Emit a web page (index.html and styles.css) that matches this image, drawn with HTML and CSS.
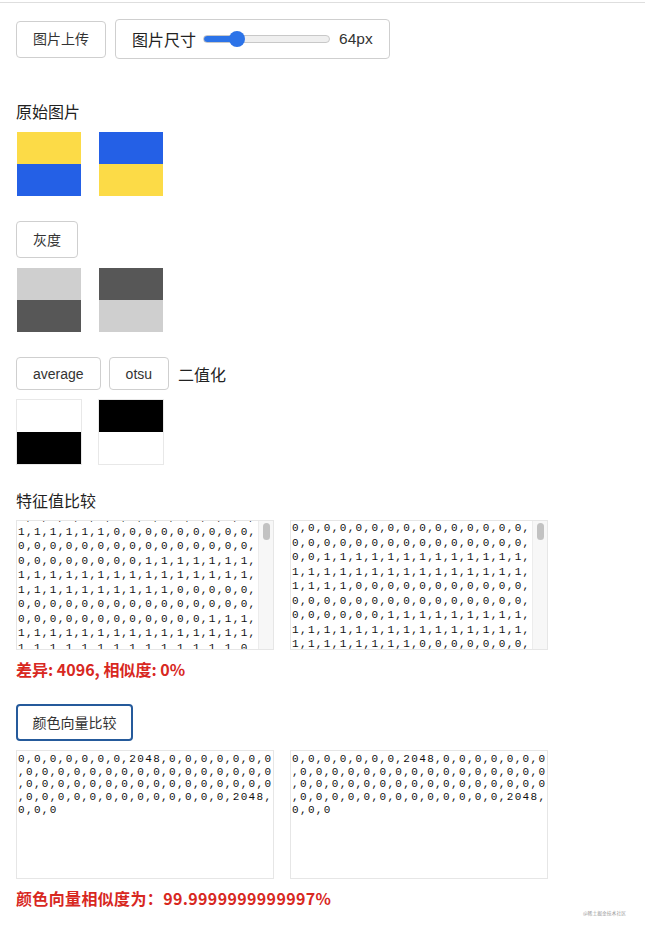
FILE: index.html
```html
<!DOCTYPE html>
<html lang="zh-CN">
<head>
<meta charset="utf-8">
<title>图片相似度比较</title>
<link rel="stylesheet" href="styles.css">
</head>
<body>
<div class="topline"></div>
<main class="page">
  <div class="toolbar">
    <button class="btn">图片上传</button>
    <div class="size-box">
      <span class="size-label">图片尺寸</span>
      <input class="size-range" type="range" min="0" max="280" value="64">
      <span class="size-value">64px</span>
    </div>
  </div>

  <section class="section section-first">
    <h2 class="title">原始图片</h2>
    <div class="thumbs">
      <div class="thumb"><div class="half yellow"></div><div class="half blue"></div></div>
      <div class="thumb"><div class="half blue"></div><div class="half yellow"></div></div>
    </div>
  </section>

  <section class="section">
    <div class="actions"><button class="btn">灰度</button></div>
    <div class="thumbs">
      <div class="thumb"><div class="half light"></div><div class="half dark"></div></div>
      <div class="thumb"><div class="half dark"></div><div class="half light"></div></div>
    </div>
  </section>

  <section class="section">
    <div class="actions">
      <button class="btn btn-sm">average</button>
      <button class="btn btn-sm">otsu</button>
      <span class="action-label">二值化</span>
    </div>
    <div class="thumbs">
      <div class="thumb framed"><div class="half white"></div><div class="half black"></div></div>
      <div class="thumb framed"><div class="half black"></div><div class="half white"></div></div>
    </div>
  </section>

  <section class="section">
    <h2 class="title">特征值比较</h2>
    <div class="boxes">
      <div class="textbox">
        <div class="textbox-text lines scrolled">1,1,1,1,1,1,1,1,1,1,1,1,1,1,1,
1,1,1,1,1,1,0,0,0,0,0,0,0,0,0,
0,0,0,0,0,0,0,0,0,0,0,0,0,0,0,
0,0,0,0,0,0,0,0,1,1,1,1,1,1,1,
1,1,1,1,1,1,1,1,1,1,1,1,1,1,1,
1,1,1,1,1,1,1,1,1,1,0,0,0,0,0,
0,0,0,0,0,0,0,0,0,0,0,0,0,0,0,
0,0,0,0,0,0,0,0,0,0,0,0,1,1,1,
1,1,1,1,1,1,1,1,1,1,1,1,1,1,1,
1,1,1,1,1,1,1,1,1,1,1,1,1,1,0,
0,0,0,0,0,0,0,0,0,0,0,0,0,0,0,</div>
        <div class="scrollbar"><div class="scroll-thumb"></div></div>
      </div>
      <div class="textbox">
        <div class="textbox-text lines">0,0,0,0,0,0,0,0,0,0,0,0,0,0,0,
0,0,0,0,0,0,0,0,0,0,0,0,0,0,0,
0,0,1,1,1,1,1,1,1,1,1,1,1,1,1,
1,1,1,1,1,1,1,1,1,1,1,1,1,1,1,
1,1,1,1,0,0,0,0,0,0,0,0,0,0,0,
0,0,0,0,0,0,0,0,0,0,0,0,0,0,0,
0,0,0,0,0,0,1,1,1,1,1,1,1,1,1,
1,1,1,1,1,1,1,1,1,1,1,1,1,1,1,
1,1,1,1,1,1,1,1,0,0,0,0,0,0,0,
0,0,0,0,0,0,0,0,0,0,0,0,0,0,0,</div>
        <div class="scrollbar"><div class="scroll-thumb"></div></div>
      </div>
    </div>
    <p class="result">差异: 4096, 相似度: 0%</p>
  </section>

  <section class="section">
    <div class="actions"><button class="btn btn-focus">颜色向量比较</button></div>
    <div class="boxes">
      <div class="textbox textbox-plain">
        <div class="textbox-text wrap">0,0,0,0,0,0,0,2048,0,0,0,0,0,0,0,0,0,0,0,0,0,0,0,0,0,0,0,0,0,0,0,0,0,0,0,0,0,0,0,0,0,0,0,0,0,0,0,0,0,0,0,0,0,0,0,0,0,0,0,0,2048,0,0,0</div>
      </div>
      <div class="textbox textbox-plain">
        <div class="textbox-text wrap">0,0,0,0,0,0,0,2048,0,0,0,0,0,0,0,0,0,0,0,0,0,0,0,0,0,0,0,0,0,0,0,0,0,0,0,0,0,0,0,0,0,0,0,0,0,0,0,0,0,0,0,0,0,0,0,0,0,0,0,0,2048,0,0,0</div>
      </div>
    </div>
    <p class="result result-wide">颜色向量相似度为：99.9999999999997%</p>
  </section>
</main>
<span class="watermark">@稀土掘金技术社区</span>
</body>
</html>
```

FILE: styles.css
```css
html, body {
  margin: 0;
  padding: 0;
  background: #fff;
}

body {
  position: relative;
  height: 930px;
  overflow: hidden;
  font-family: "Noto Sans CJK SC", "Liberation Sans", sans-serif;
  color: #222;
}

.topline {
  height: 2px;
  border-bottom: 1px solid #dedede;
}

.page {
  padding: 0 16px;
}

/* upload + size slider */
.toolbar {
  display: flex;
  align-items: center;
  gap: 9px;
  margin-top: 16px;
  height: 40px;
}

.btn {
  box-sizing: border-box;
  height: 37px;
  padding: 0 16px;
  border: 1px solid #cfcfcf;
  border-radius: 4px;
  background: #fff;
  color: #333;
  font-family: "Liberation Sans", "Noto Sans CJK SC", sans-serif;
  font-size: 14px;
  line-height: 1;
  cursor: pointer;
}

.btn-sm {
  height: 33px;
}

.btn-focus {
  border: 2px solid #255a9b;
  padding: 0 14.5px;
}

.size-box {
  box-sizing: border-box;
  height: 40px;
  display: flex;
  align-items: center;
  gap: 9px;
  padding: 0 16px;
  border: 1px solid #cfcfcf;
  border-radius: 4px;
  font-size: 16px;
}

.size-label {
  color: #222;
}

.size-value {
  font-family: "Liberation Sans", sans-serif;
  font-size: 15.5px;
  color: #333;
}

.size-range {
  -webkit-appearance: none;
  appearance: none;
  width: 127px;
  height: 8px;
  margin: 0 0 0 -2px;
  border: 1px solid #c8c8c8;
  border-radius: 5px;
  background: linear-gradient(to right, #2c73e8 0 26%, #efefef 26% 100%);
  box-sizing: border-box;
}

.size-range::-webkit-slider-thumb {
  -webkit-appearance: none;
  appearance: none;
  width: 16px;
  height: 16px;
  border-radius: 50%;
  background: #2c73e8;
  border: none;
}

/* sections */
.section {
  margin-top: 24px;
}

.section-first {
  margin-top: 41px;
}

.title {
  margin: 0;
  font-size: 16px;
  font-weight: 400;
  line-height: 22px;
  color: #222;
}

.actions {
  display: flex;
  align-items: center;
  gap: 8px;
}

.action-label {
  margin-left: 1px;
  font-size: 16px;
  color: #222;
}

.thumbs {
  display: flex;
  gap: 16px;
  margin-top: 9px;
}

.thumb {
  width: 64px;
  height: 64px;
  border: 1px solid #fff;
  display: flex;
  flex-direction: column;
}

.thumb.framed {
  border-color: #e8e8e8;
}

.half {
  flex: 1;
}

.yellow { background: #fcdb47; }
.blue { background: #2460e6; }
.light { background: #cfcfcf; }
.dark { background: #575757; }
.white { background: #fff; }
.black { background: #000; }

/* text areas */
.boxes {
  display: flex;
  gap: 16px;
  margin-top: 9px;
}

.textbox {
  box-sizing: border-box;
  width: 258px;
  height: 130px;
  border: 1px solid #e6e6e6;
  display: flex;
  overflow: hidden;
}

.textbox-plain {
  height: 129px;
}

.textbox-text {
  flex: 1;
  min-width: 0;
  padding: 2px 0 0 1px;
  font-family: "Liberation Mono", monospace;
  font-size: 11px;
  letter-spacing: 1.35px;
  line-height: 12.67px;
  color: #111;
  overflow: hidden;
}

.textbox-text.lines {
  padding-top: 0;
  line-height: 14.5px;
  white-space: pre;
}

.textbox-text.scrolled {
  margin-top: -11px;
}

.textbox-text.wrap {
  white-space: normal;
  word-break: break-all;
  line-break: anywhere;
}

.scrollbar {
  width: 14px;
  flex: none;
  background: #f7f7f7;
  border-left: 1px solid #ececec;
  padding-top: 2px;
}

.scroll-thumb {
  width: 7px;
  height: 17px;
  margin: 0 auto;
  border-radius: 4px;
  background: #c2c2c2;
}

.result {
  margin: 8px 0 0;
  font-size: 16px;
  font-weight: 700;
  line-height: 22px;
  color: #d8281f;
}

.result-wide {
  letter-spacing: 0.35px;
}

.watermark {
  position: absolute;
  right: 19px;
  bottom: 14px;
  font-size: 4.8px;
  color: #999;
}
```
